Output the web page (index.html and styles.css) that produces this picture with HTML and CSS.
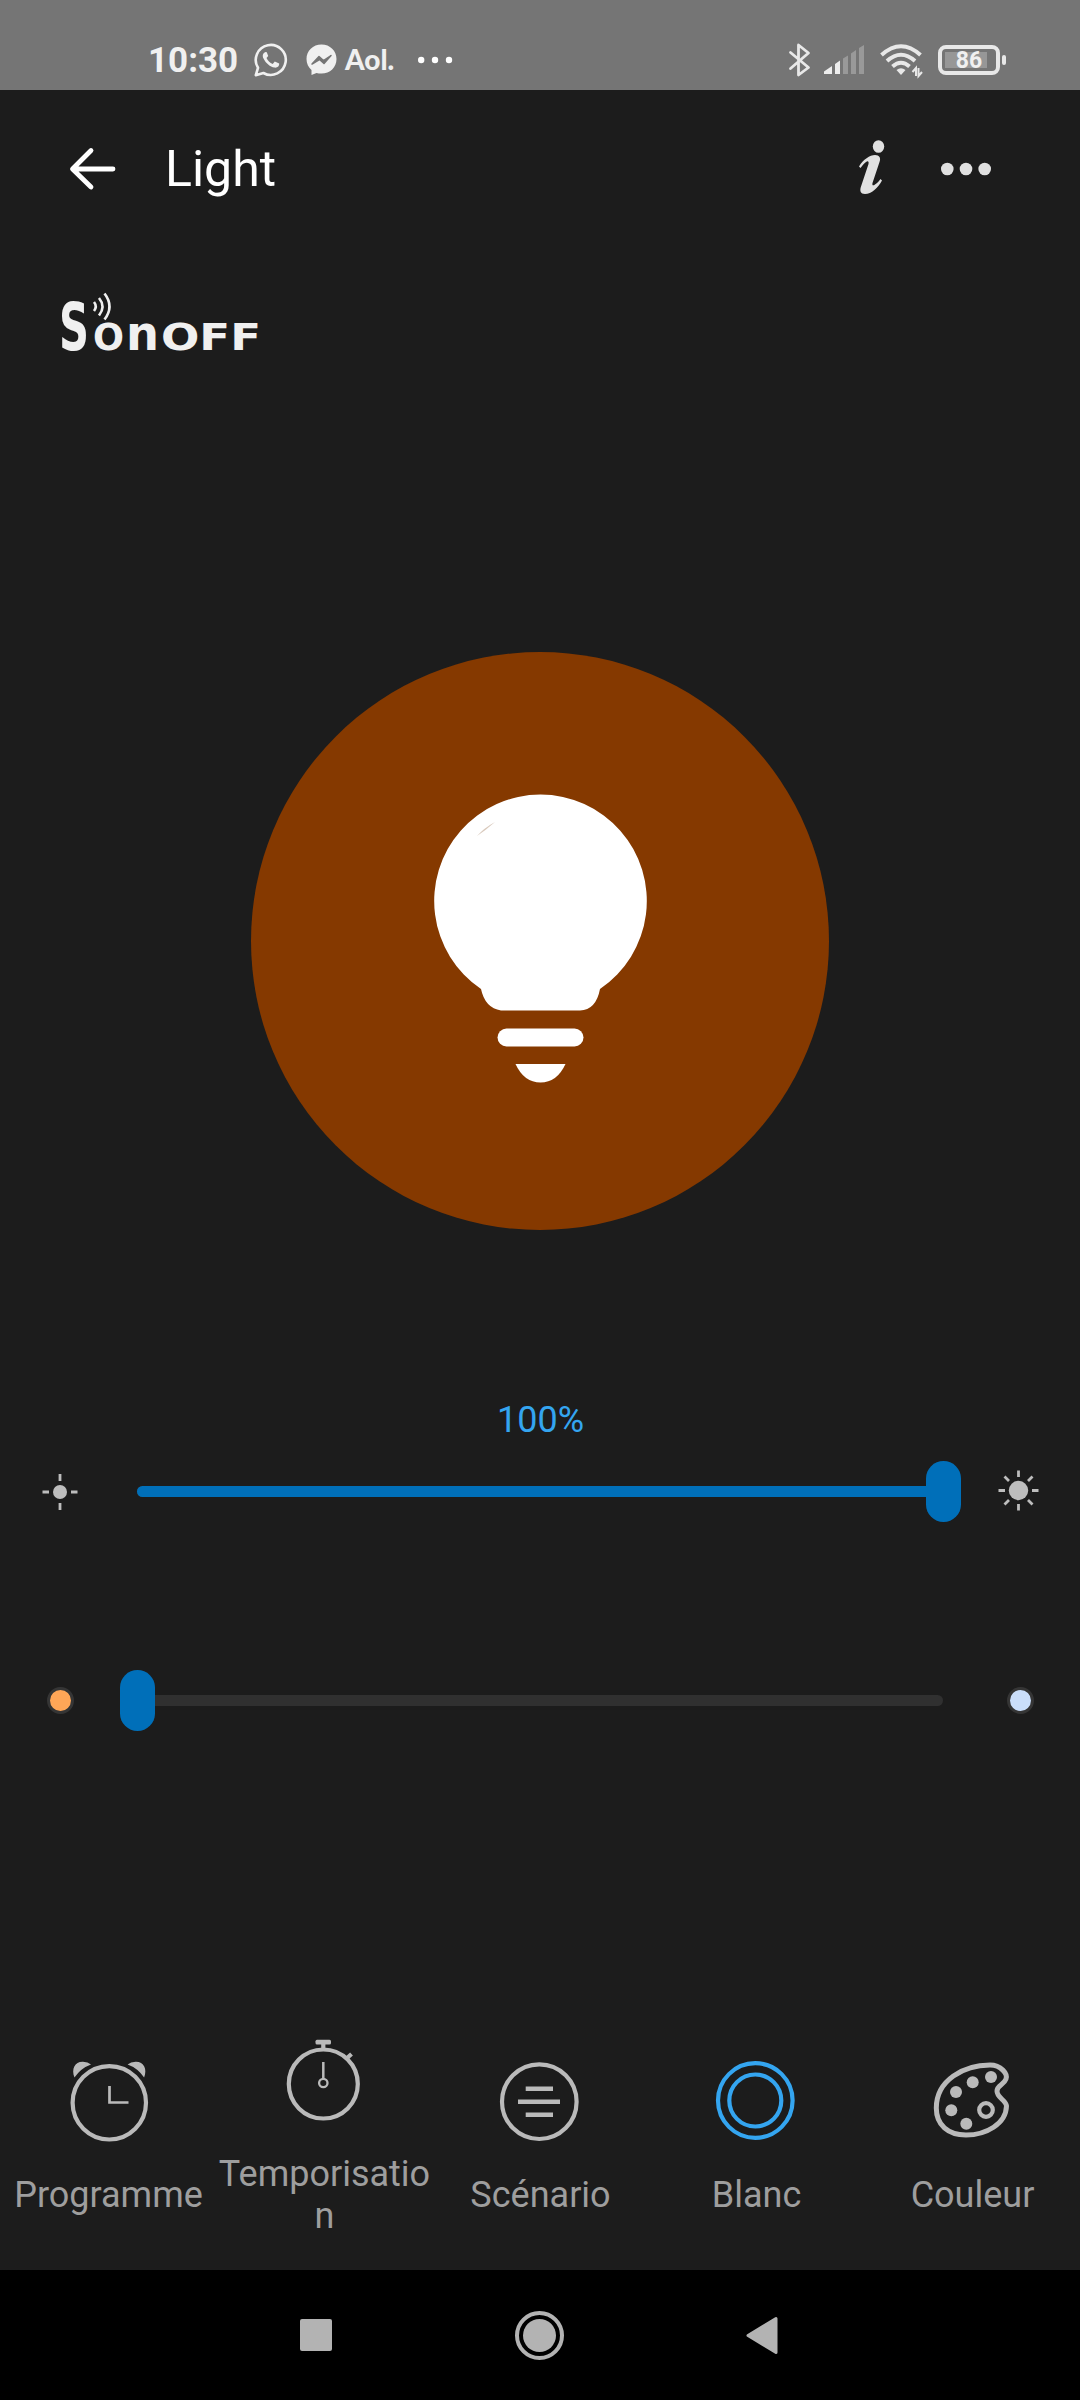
FILE: index.html
```html
<!DOCTYPE html>
<html lang="fr">

<head>
    <meta charset="utf-8">
    <meta name="viewport" content="width=device-width, initial-scale=1">
    <title>Light</title>
    <link rel="stylesheet" href="styles.css">
</head>

<body>
    <div class="status-bar">
        <span class="time">10:30</span>
        <svg class="whatsapp" width="34" height="34" viewBox="0 0 34 34">
            <path d="M1.8 32.2 L4 24.8 A15 15 0 1 1 9.4 30 Z" fill="none" stroke="#f0f0f0" stroke-width="2.6" stroke-linejoin="round" />
            <path d="M11.5 9 C9 10 8 12.500 9.500 15.500 C12 20.500 16 23.800 20.500 24.600 C23.500 25 25.500 23 25.200 20.500 L20.800 18.400 L18.700 21 C16 20 13.500 17.500 12.500 15 L14.200 13 L12.800 9.200 Z" fill="#f0f0f0" />
        </svg>
        <svg class="messenger" width="31" height="32" viewBox="0 0 31 32">
            <path d="M15.500 .5 C7 .5 .5 6.700 .5 15 C.5 19.500 2.400 23.400 5.500 26 V31 L10.500 28.900 C12 29.400 13.800 29.600 15.500 29.600 C24 29.600 30.500 23.400 30.500 15 C30.500 6.700 24 .5 15.500 .5 Z" fill="#f0f0f0" />
            <path d="M6 20 L13 12.500 L17.500 16.500 L25 11.500 L18 19.500 L13.500 15.500 Z" fill="#757575" stroke="#757575" stroke-width="1.500" stroke-linejoin="round" />
        </svg>
        <span class="aol">Aol.</span>
        <svg class="more" width="34" height="8" viewBox="0 0 34 8" fill="#fff">
            <circle cx="3.200" cy="4" r="3.200" />
            <circle cx="17" cy="4" r="3.200" />
            <circle cx="31" cy="4" r="3.200" />
        </svg>

        <svg class="bluetooth" width="22" height="34" viewBox="0 0 22 34">
            <path d="M1.500 9.500 L19.500 24.500 L9.500 32 V2 L19.500 10 L1.500 25.500" fill="none" stroke="#e8e8e8" stroke-width="2.800" stroke-linejoin="round" stroke-linecap="round" />
        </svg>
        <svg class="signal" width="40" height="30" viewBox="0 0 40 30">
            <path d="M0 29 V26.500 L8 21 V29 Z M11 29 V19 L16 15.500 V29 Z" fill="#ededed" />
            <path d="M19 29 V13.500 L24 10.500 V29 Z M27 29 V8.500 L32 5 V29 Z M35 29 V3 L40 0 V29 Z" fill="#999" />
        </svg>
        <svg class="wifi" width="43" height="34" viewBox="0 0 43 34">
            <g fill="none" stroke="#e8e8e8" stroke-width="4">
                <path d="M1.500 11 Q21 -6.500 40.500 11" />
                <path d="M7 17 Q21 4.500 35 17" />
                <path d="M12.500 22.500 Q21 15 29.500 22.500" />
            </g>
            <path d="M16.500 26 Q21 22.500 25.500 26 L21 31 Z" fill="#e8e8e8" />
            <path d="M36 32 V24 L32.500 28 M38.500 24 V32 L42 28" fill="none" stroke="#e8e8e8" stroke-width="2" />
        </svg>
        <div class="battery">
            <div class="battery-body"><span>86</span></div>
            <div class="battery-cap"></div>
        </div>
    </div>

    <div class="header">
        <svg class="back" width="46" height="42" viewBox="0 0 46 42">
            <path d="M21 2.500 L2.500 21 L21 39 M3 21 H43" fill="none" stroke="#fff" stroke-width="4.800" stroke-linecap="round" stroke-linejoin="round" />
        </svg>
        <h1>Light</h1>
        <!-- info icon -->
        <svg class="info" width="26" height="54" viewBox="0 0 26 54" fill="#e0e0e0">
            <ellipse cx="19.500" cy="6.500" rx="5.700" ry="6.300" />
            <path d="M0 26.500 C4 19.500 11 15 16 15 C20.500 15 22 18 20.500 22 L13.500 43 C13 45.500 14 46 16 44.500 C18.500 43 20 41 21.500 39 L23 40.500 C19 48 12.500 54 6 54 C1.500 54 .5 51 2 46.500 L9.500 24 C10 21.500 9 20.500 7 22 C5 23.500 3 26 1.500 28 Z" />
        </svg>
        <svg width="50" height="14" viewBox="0 0 50 14" fill="#e0e0e0">
            <circle cx="6.300" cy="7" r="6.300" />
            <circle cx="25" cy="7" r="6.300" />
            <circle cx="43.700" cy="7" r="6.300" />
        </svg>
    </div>

    <div class="main">
        <svg class="logo" width="202" height="60" viewBox="0 0 202 60">
            <text y="57.500" fill="#f0f0f0">
                <tspan x="-1" font-size="65" textLength="30" lengthAdjust="spacingAndGlyphs">S</tspan><tspan x="33" font-size="37" textLength="31" lengthAdjust="spacingAndGlyphs">O</tspan><tspan x="66" font-size="48" textLength="33" lengthAdjust="spacingAndGlyphs">n</tspan><tspan x="101" font-size="37" textLength="100" lengthAdjust="spacingAndGlyphs">OFF</tspan>
            </text>
            <path d="M34 10 Q37.500 14.500 34 19 M39 6 Q46 14.500 39 23.500 M44.500 1.500 Q54.500 14.500 44.500 27.500" fill="none" stroke="#f0f0f0" stroke-width="2.600" />
        </svg>

        <div class="lamp">
            <svg width="214" height="289" viewBox="0 0 214 289" fill="#fff">
                <path d="M47 194 A106.300 106.300 0 1 1 166 194 Q162 215 146 215.500 H67 Q51 213 47 194 Z" />
                <rect x="63.500" y="233.500" width="86" height="18" rx="9" />
                <path d="M81.500 269 H131.500 Q123 287.500 106.500 287.500 Q90 287.500 81.500 269 Z" />
                <path d="M43 41 Q50 33 61 27 Q52 35 43 41 Z" fill="#d9c9bc" />
            </svg>
        </div>

        <div class="percent">100%</div>

        <div class="slider-row">
            <svg class="side-icon" width="42" height="42" viewBox="0 0 42 42">
                <circle cx="21" cy="21" r="7" fill="#bdbdbd" />
                <path d="M21 3 V10 M21 32 V39 M3.500 21 H10 M32 21 H38.500" stroke="#bdbdbd" stroke-width="2.800" />
            </svg>
            <div class="slider">
                <div class="fill" style="width: 100%"></div>
                <div class="thumb" style="left: 100%"></div>
            </div>
            <svg class="side-icon" width="42" height="42" viewBox="0 0 42 42">
                <circle cx="19.500" cy="19.500" r="9.700" fill="#bdbdbd" />
                <path d="M19.500 -.5 V6 M19.500 33 V39.500 M-.5 19.500 H6 M33 19.500 H39.500 M5.500 5.500 L10 10 M33.500 5.500 L29 10 M5.500 33.500 L10 29 M33.500 33.500 L29 29" stroke="#bdbdbd" stroke-width="2.800" />
            </svg>
        </div>

        <div class="slider-row temperature">
            <div class="side-icon"><div class="dot warm"></div></div>
            <div class="slider">
                <div class="fill" style="width: 0%"></div>
                <div class="thumb" style="left: 0%"></div>
            </div>
            <div class="side-icon"><div class="dot cold"></div></div>
        </div>
    </div>

    <div class="tabs">
        <div class="tab">
            <svg width="88" height="88" viewBox="0 0 88 88">
                <circle cx="45.300" cy="44.800" r="36.700" />
                <path d="M45.500 28 V44.500 H64.500" stroke-width="2.700" />
                <path class="solid" d="M10.500 19.500 C7 11 11 3.500 19 3.800 Q24 4 27 6.500 Q17 10 10.500 19.500 Z M80.100 19.500 C83.600 11 79.600 3.500 71.600 3.800 Q66.600 4 63.600 6.500 Q73.600 10 80.100 19.500 Z" />
            </svg>
            <span>Programme</span>
        </div>
        <div class="tab">
            <svg width="88" height="88" viewBox="0 0 88 88">
                <circle cx="43.300" cy="47" r="34.500" />
                <rect class="solid" x="35.500" y="2.700" width="15.500" height="4.800" rx="1.500" />
                <path d="M43.300 6 V12 M66 22 L71.500 17" />
                <path d="M43.300 25 V42" stroke-width="2.500" />
                <circle cx="43.300" cy="46" r="4.200" stroke-width="2.300" />
            </svg>
            <span>Temporisation</span>
        </div>
        <div class="tab">
            <svg width="88" height="88" viewBox="0 0 88 88">
                <circle cx="43.300" cy="43.700" r="37.300" />
                <path d="M29.700 30.700 H57 M22 43.700 H64 M29.700 56.700 H57" stroke-width="4.500" />
            </svg>
            <span>Scénario</span>
        </div>
        <div class="tab active">
            <svg width="88" height="88" viewBox="0 0 88 88">
                <circle cx="43.300" cy="42.500" r="37.300" />
                <circle cx="43.300" cy="42.500" r="26" />
            </svg>
            <span>Blanc</span>
        </div>
        <div class="tab">
            <svg width="88" height="88" viewBox="0 0 88 88">
                <path d="M62 7 C73 7 80 16 78 21 C76 27 69 27 69 33 C69 40 78 42 78.500 48 C78 66 58 77 38 77 C20 77 8.300 67 8.300 50 C8.300 22 36 7 62 7 Z" stroke-width="5" />
                <g class="solid">
                    <circle cx="63" cy="19" r="6" />
                    <circle cx="44.700" cy="24.300" r="6" />
                    <circle cx="28" cy="34" r="6" />
                    <circle cx="23.300" cy="52.300" r="6" />
                    <circle cx="38.300" cy="65.700" r="6" />
                </g>
                <circle cx="58" cy="52" r="6.800" />
            </svg>
            <span>Couleur</span>
        </div>
    </div>

    <div class="nav-bar">
        <div class="recent"></div>
        <div class="home"></div>
        <svg width="32" height="38" viewBox="0 0 32 38">
            <path d="M2 19.500 L30 2.500 V36.500 Z" fill="#b3b3b3" stroke="#b3b3b3" stroke-width="3" stroke-linejoin="round" />
        </svg>
    </div>
</body>

</html>
```
FILE: styles.css
```css
* {
    box-sizing: border-box;
}

body {
    margin: 0;
    width: 1080px;
    height: 2400px;
    display: flex;
    flex-direction: column;
    background: #1c1c1c;
    color: #fff;
    font-family: Roboto, "Liberation Sans", sans-serif;
    overflow: hidden;
}

svg {
    display: block;
    flex: none;
    overflow: visible;
}

/* Android status bar */
.status-bar {
    height: 90px;
    padding: 30px 74px 0 148px;
    display: flex;
    align-items: center;
    background: #757575;
    color: #f0f0f0;
}

.time {
    width: 106px;
    font-size: 35px;
    font-weight: 700;
    line-height: 60px;
    padding-top: 1px;
}

.messenger {
    margin-left: 18px;
}

.aol {
    width: 51px;
    margin: 0 22px 2px 8px;
    font-family: Lato, sans-serif;
    font-size: 28px;
    font-weight: 900;
}

.bluetooth {
    margin-left: auto;
}

.signal {
    margin-left: 13px;
}

.wifi {
    margin: 2px 15px 0 16px;
}

.battery {
    display: flex;
    align-items: center;
    gap: 2px;
}

.battery-body {
    width: 62px;
    height: 30px;
    border: 4px solid #e8e8e8;
    border-radius: 8px;
    text-align: center;
    font-size: 23px;
    font-weight: 700;
    line-height: 24px;
    background: linear-gradient(#979797, #979797) 3px 3px / 42px 16px no-repeat;
}

.battery-cap {
    width: 4px;
    height: 10px;
    border-radius: 2px;
    background: #e8e8e8;
}

/* Title row */
.header {
    height: 158px;
    padding: 0 89px 0 70px;
    display: flex;
    align-items: center;
}

.header h1 {
    margin: 0 auto 0 49px;
    font-size: 50px;
    font-weight: 400;
}

.info {
    margin: 0 56px 4px 0;
}

.main {
    display: flex;
    flex-direction: column;
    height: 1756px;
}

.logo {
    margin: 44px 0 0 60px;
    font-family: "DejaVu Sans", sans-serif;
    font-weight: 700;
}

.lamp {
    width: 578px;
    height: 578px;
    margin: 300px auto 0;
    padding: 143px 0 0 183px;
    border-radius: 50%;
    background: #853900;
}

.percent {
    margin-top: 169px;
    padding-left: 1px;
    color: #34a5f0;
    font-size: 36px;
    line-height: 42px;
    text-align: center;
}

/* Sliders */
.slider-row {
    display: flex;
    align-items: center;
    justify-content: space-between;
    height: 61px;
    margin-top: 20px;
    padding: 0 39px;
}

.slider-row.temperature {
    margin-top: 148px;
}

.side-icon {
    width: 42px;
    display: flex;
    justify-content: center;
}

.slider {
    position: relative;
    width: 806px;
    height: 11px;
    border-radius: 6px;
    background: #303030;
}

.fill {
    height: 100%;
    border-radius: 6px;
    background: #006fb9;
}

.thumb {
    position: absolute;
    top: -25px;
    width: 35px;
    height: 61px;
    margin-left: -17px;
    border-radius: 18px;
    background: #006fb9;
}

.dot {
    width: 27px;
    height: 27px;
    border: 3px solid #353535;
    border-radius: 50%;
}

.warm {
    background: #ffa657;
}

.cold {
    background: #cadefa;
}

/* Bottom tabs */
.tabs {
    display: flex;
    height: 266px;
}

.tab {
    width: 216px;
    display: flex;
    flex-direction: column;
    align-items: center;
    justify-content: center;
    gap: 28px;
    color: #9e9e9e;
    font-size: 36px;
    line-height: 42px;
    text-align: center;
    word-break: break-all;
}

.tab span {
    padding-left: 1px;
}

.tab svg {
    fill: none;
    stroke: #bababa;
    stroke-width: 4.2;
}

.tab .solid {
    fill: #bababa;
    stroke: none;
}

.tab.active svg {
    stroke: #34a5f0;
}

/* Android navigation bar */
.nav-bar {
    display: flex;
    align-items: center;
    justify-content: space-between;
    height: 130px;
    padding: 0 302px 0 300px;
    background: #000;
}

.recent {
    width: 32px;
    height: 32px;
    border-radius: 2px;
    background: #b3b3b3;
}

.home {
    width: 49px;
    height: 49px;
    border: 4px solid #b3b3b3;
    border-radius: 50%;
    padding: 4px;
    background: #b3b3b3 content-box;
}
```
